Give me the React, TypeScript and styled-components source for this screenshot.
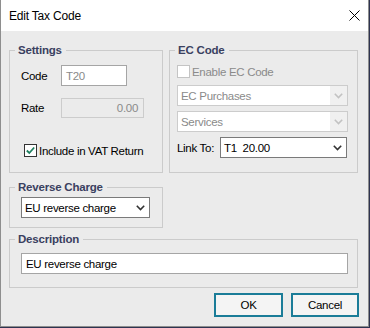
import React from "react";
import styled, { createGlobalStyle, css } from "styled-components";

const Global = createGlobalStyle`
  html, body { margin: 0; padding: 0; background: #2e3350; }
  body { font-family: "Liberation Sans", Arial, sans-serif; font-size: 11.5px; letter-spacing: -0.3px; color: #000; }
  * { box-sizing: border-box; }
`;

const Window = styled.div`
  width: 369px;
  height: 327px;
  background: #ebebeb;
  border-left: 1px solid #8e8e8e;
  border-right: 1px solid #8e8e8e;
  border-bottom: 1px solid #8e8e8e;
  display: flex;
  flex-direction: column;
`;

const TitleBar = styled.div`
  height: 31px;
  background: #fff;
  display: flex;
  align-items: center;
  justify-content: space-between;
  padding: 0 8px 0 8px;
  font-size: 12px;
  letter-spacing: -0.2px;
`;

const Body = styled.div`
  display: flex;
  flex-direction: column;
  padding: 11px 10px 0 8px;
`;

const Row = styled.div`
  display: flex;
  gap: 6px;
`;

const Group = styled.fieldset<{ $w: number; $h: number; $mt?: number }>`
  margin: ${(p) => p.$mt ?? 0}px 0 0 0;
  padding: 0;
  border: 1px solid #cbcbcb;
  width: ${(p) => p.$w}px;
  height: ${(p) => p.$h}px;
  min-width: 0;
`;

const Legend = styled.legend`
  font-weight: bold;
  font-size: 11.5px;
  letter-spacing: -0.2px;
  line-height: 16px;
  color: #3a4060;
  padding: 0 4px 0 3px;
  margin-left: 5px;
`;

const Content = styled.div<{ $pt: number; $pl: number }>`
  display: flex;
  flex-direction: column;
  align-items: flex-start;
  padding: ${(p) => p.$pt}px 0 0 ${(p) => p.$pl}px;
`;

const FieldRow = styled.div<{ $mt?: number }>`
  display: flex;
  align-items: center;
  margin-top: ${(p) => p.$mt ?? 0}px;
`;

const Label = styled.span<{ $w: number }>`
  width: ${(p) => p.$w}px;
  white-space: nowrap;
`;

const TextBox = styled.div<{ $w: number; $h?: number; $disabled?: boolean; $dim?: boolean; $right?: boolean }>`
  width: ${(p) => p.$w}px;
  height: ${(p) => p.$h ?? 21}px;
  border: 1px solid ${(p) => (p.$disabled ? "#cccccc" : "#a5a5a5")};
  background: ${(p) => (p.$disabled ? "#ebebeb" : "#ffffff")};
  color: ${(p) => (p.$dim || p.$disabled ? "#8a8a8a" : "#000")};
  display: flex;
  align-items: center;
  justify-content: ${(p) => (p.$right ? "flex-end" : "flex-start")};
  padding: 0 5px 0 4px;
  white-space: nowrap;
`;

const Combo = styled.div<{ $w: number; $disabled?: boolean }>`
  width: ${(p) => p.$w}px;
  height: 21px;
  border: 1px solid ${(p) => (p.$disabled ? "#cccccc" : "#7a7a7a")};
  background: #fff;
  color: ${(p) => (p.$disabled ? "#8a8a8a" : "#000")};
  display: flex;
  align-items: center;
  justify-content: space-between;
  padding-left: 3px;
  white-space: pre;
`;

const Arrow = styled.span<{ $disabled?: boolean }>`
  width: 17px;
  height: 100%;
  display: flex;
  align-items: center;
  justify-content: center;
  ${(p) =>
    p.$disabled &&
    css`
      background: #f0f0f0;
    `}
`;

const Check = styled.span<{ $disabled?: boolean }>`
  width: 13px;
  height: 13px;
  border: 1px solid ${(p) => (p.$disabled ? "#c4c4c4" : "#333333")};
  background: #fff;
  display: inline-flex;
  align-items: center;
  justify-content: center;
  margin-right: 2px;
`;

const CheckRow = styled.label<{ $mt?: number; $ml?: number; $disabled?: boolean }>`
  display: flex;
  align-items: center;
  height: 13px;
  margin-top: ${(p) => p.$mt ?? 0}px;
  margin-left: ${(p) => p.$ml ?? 0}px;
  color: ${(p) => (p.$disabled ? "#8a8a8a" : "#000")};
  white-space: nowrap;
`;

const Buttons = styled.div`
  display: flex;
  justify-content: flex-end;
  gap: 8px;
  margin: 5px -1px 0 0;
`;

const Button = styled.button<{ $w: number }>`
  width: ${(p) => p.$w}px;
  height: 24px;
  border: 2px solid #1a7c98;
  background: #f4f4f4;
  font-family: "Liberation Sans", Arial, sans-serif;
  font-size: 11.5px;
  letter-spacing: -0.3px;
  color: #000;
  padding: 0;
`;

const Chevron = ({ disabled }: { disabled?: boolean }) => (
  <Arrow $disabled={disabled}>
    <svg width="9" height="6" viewBox="0 0 9 6">
      <polyline points="0.8,0.8 4.5,4.5 8.2,0.8" fill="none" stroke={disabled ? "#c2c2c2" : "#333"} strokeWidth="1.6" />
    </svg>
  </Arrow>
);

const CloseIcon = () => (
  <svg width="11" height="11" viewBox="0 0 11 11">
    <path d="M0.5 0.5 L10.5 10.5 M10.5 0.5 L0.5 10.5" stroke="#000" strokeWidth="1" />
  </svg>
);

export default function App() {
  return (
    <>
      <Global />
      <Window>
        <TitleBar>
          <span>Edit Tax Code</span>
          <CloseIcon />
        </TitleBar>
        <Body>
          <Row>
            <Group $w={154} $h={131}>
              <Legend>Settings</Legend>
              <Content $pt={7} $pl={11}>
                <FieldRow>
                  <Label $w={40}>Code</Label>
                  <TextBox $w={66} $dim>T20</TextBox>
                </FieldRow>
                <FieldRow $mt={12}>
                  <Label $w={40}>Rate</Label>
                  <TextBox $w={83} $h={20} $disabled $right>0.00</TextBox>
                </FieldRow>
                <CheckRow $mt={26} $ml={3}>
                  <Check>
                    <svg width="11" height="11" viewBox="0 0 11 11">
                      <polyline points="1.8,5.5 4.3,8 9.2,2.5" fill="none" stroke="#1f8060" strokeWidth="1.8" />
                    </svg>
                  </Check>
                  Include in VAT Return
                </CheckRow>
              </Content>
            </Group>
            <Group $w={189} $h={131}>
              <Legend>EC Code</Legend>
              <Content $pt={7} $pl={7}>
                <CheckRow $disabled>
                  <Check $disabled />
                  Enable EC Code
                </CheckRow>
                <FieldRow $mt={7}>
                  <Combo $w={171} $disabled>
                    EC Purchases
                    <Chevron disabled />
                  </Combo>
                </FieldRow>
                <FieldRow $mt={5}>
                  <Combo $w={171} $disabled>
                    Services
                    <Chevron disabled />
                  </Combo>
                </FieldRow>
                <FieldRow $mt={5}>
                  <Label $w={43}>Link To:</Label>
                  <Combo $w={127}>
                    {"T1  20.00"}
                    <Chevron />
                  </Combo>
                </FieldRow>
              </Content>
            </Group>
          </Row>
          <Group $w={154} $h={49} $mt={6}>
            <Legend>Reverse Charge</Legend>
            <Content $pt={2} $pl={11}>
              <Combo $w={129}>
                EU reverse charge
                <Chevron />
              </Combo>
            </Content>
          </Group>
          <Group $w={349} $h={57} $mt={3}>
            <Legend>Description</Legend>
            <Content $pt={6} $pl={11}>
              <TextBox $w={327}>EU reverse charge</TextBox>
            </Content>
          </Group>
          <Buttons>
            <Button $w={69}>OK</Button>
            <Button $w={68}>Cancel</Button>
          </Buttons>
        </Body>
      </Window>
    </>
  );
}
